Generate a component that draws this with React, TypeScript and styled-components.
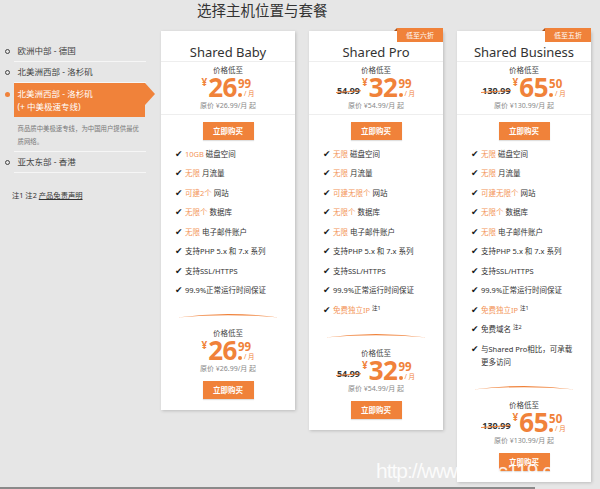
import React from 'react';
import styled, {createGlobalStyle} from 'styled-components';

const ORANGE = '#f0823a';

const GlobalStyle = createGlobalStyle`
  html, body { margin: 0; padding: 0; background: #e6e6e6; }
  body {
    font-family: "Noto Sans", "Noto Sans CJK SC", sans-serif;
    color: #333;
    overflow: hidden;
  }
`;

const Page = styled.div`
  position: relative;
  width: 600px;
  height: 489px;
  overflow: hidden;
`;

const Title = styled.h1`
  margin: 0;
  padding-left: 197px;
  font: normal 14.5px/20px "Noto Sans CJK SC", sans-serif;
  color: #333;
`;

const Main = styled.div`
  display: flex;
  align-items: flex-start;
  margin-top: 11px;
`;

/* ---------- sidebar ---------- */

const Sidebar = styled.div`
  width: 161px;
  flex-shrink: 0;
  padding-top: 10px;
`;

const Region = styled.div`
  display: flex;
  align-items: flex-start;
`;

const Bullet = styled.span<{ $on?: boolean }>`
  box-sizing: border-box;
  width: 5px;
  height: 5px;
  margin: 7.5px 4px 0 4.5px;
  border-radius: 50%;
  flex-shrink: 0;
  border: ${p => (p.$on ? 'none' : '1.2px solid #444')};
  background: ${p => (p.$on ? ORANGE : 'transparent')};
  ${p => p.$on && 'margin-top: 9px;'}
`;

const RegionBody = styled.div`
  width: 132px;
  border-bottom: 1px solid #f6f6f6;
`;

const RegionName = styled.div`
  padding-left: 4px;
  font: 8.5px/20px "Noto Sans", "Noto Sans CJK SC", sans-serif;
  color: #444;
`;

const ActiveBox = styled.div`
  position: relative;
  width: 131px;
  box-sizing: border-box;
  padding: 4px 4px;
  background: ${ORANGE};
  color: #fff;
  font: 8.5px/13px "Noto Sans", "Noto Sans CJK SC", sans-serif;
  &::after {
    content: '';
    position: absolute;
    left: 100%;
    top: 0;
    border-left: 10px solid ${ORANGE};
    border-top: 11px solid transparent;
    border-bottom: 11px solid transparent;
  }
`;

const RegionDesc = styled.div`
  padding: 4.5px 6px 3.5px 4px;
  font: 6.4px/13px "Noto Sans CJK SC", sans-serif;
  color: #777;
`;

const Notes = styled.div`
  margin: 16px 0 0 12px;
  font: 7.3px/12px "Noto Sans", "Noto Sans CJK SC", sans-serif;
  color: #333;
  a { color: #333; text-decoration: underline; }
`;

/* ---------- cards ---------- */

const Cards = styled.div`
  display: flex;
  align-items: flex-start;
  gap: 14px;
`;

const Card = styled.div`
  position: relative;
  width: 134px;
  padding-bottom: 11px;
  background: #fff;
  box-shadow: 1px 1px 3px rgba(0, 0, 0, 0.18);
  display: flex;
  flex-direction: column;
`;

const Badge = styled.div`
  position: absolute;
  top: -3px;
  right: 0;
  width: 46px;
  height: 14px;
  background: ${ORANGE};
  color: #fff;
  font: 7px/14px "Noto Sans CJK SC", sans-serif;
  text-align: center;
  &::before {
    content: '';
    position: absolute;
    left: -3px;
    top: 0;
    border-bottom: 3px solid #a9521c;
    border-left: 3px solid transparent;
  }
`;

const CardHead = styled.div`
  box-sizing: border-box;
  height: 31px;
  padding-top: 13px;
  border-bottom: 1px solid #eee;
  text-align: center;
  font: 13px/17px "Noto Sans", sans-serif;
  color: #333;
`;

const PriceBlock = styled.div<{ $divided?: boolean }>`
  text-align: center;
  padding-bottom: ${p => (p.$divided ? '3px' : '0')};
  border-bottom: ${p => (p.$divided ? '1px solid #eee' : 'none')};
`;

const PriceLabel = styled.div<{ $gap: number }>`
  margin-top: ${p => p.$gap}px;
  font: 7.5px/10px "Noto Sans CJK SC", sans-serif;
  color: #444;
`;

const PriceRow = styled.div`
  display: flex;
  justify-content: center;
  align-items: flex-end;
  height: 22px;
  margin-top: 1px;
  color: ${ORANGE};
  font-family: "Noto Sans", sans-serif;
  font-weight: 700;
`;

const OldPrice = styled.span`
  position: relative;
  margin: 0 2px 2px 0;
  font-size: 9px;
  line-height: 10px;
  color: #333;
  &::after {
    content: '';
    position: absolute;
    left: -1px;
    right: -1px;
    top: 5px;
    height: 1.2px;
    background: ${ORANGE};
    transform: rotate(-4deg);
  }
`;

const Yen = styled.span`
  align-self: flex-start;
  margin: 2px 1px 0 0;
  font-size: 10px;
  line-height: 9px;
`;

const BigNum = styled.span`
  font-size: 26px;
  line-height: 22px;
  letter-spacing: -0.5px;
`;

const Decimal = styled.span`
  align-self: stretch;
  display: flex;
  flex-direction: column;
  justify-content: space-between;
  margin-left: 1px;
  text-align: left;
`;

const Cents = styled.span`
  margin-top: 3px;
  font-size: 11.5px;
  line-height: 10px;
`;

const DecBottom = styled.span`
  display: flex;
  align-items: flex-end;
`;

const Dot = styled.span`
  width: 4px;
  height: 4px;
  margin: 0 2px 1px 0;
  border-radius: 50%;
  background: ${ORANGE};
`;

const Per = styled.span`
  font: 400 6.5px/8px "Noto Sans", "Noto Sans CJK SC", sans-serif;
`;

const OrigPrice = styled.div`
  margin-top: 3px;
  font: 7px/10px "Noto Sans", "Noto Sans CJK SC", sans-serif;
  color: #888;
`;

const BuyButton = styled.button<{ $top: number }>`
  display: block;
  width: 51px;
  height: 18px;
  margin: ${p => p.$top}px auto 0;
  padding: 0;
  border: none;
  background: ${ORANGE};
  color: #fff;
  font: 700 7.5px/18px "Noto Sans CJK SC", sans-serif;
  box-shadow: 0 1px 1px rgba(0, 0, 0, 0.12);
`;

const Features = styled.ul`
  list-style: none;
  margin: 4.25px 0 0;
  padding: 0 16px 0 14px;
`;

const Feature = styled.li`
  display: flex;
  padding: 3.25px 0;
  font: 7.5px/13px "Noto Sans", "Noto Sans CJK SC", sans-serif;
  color: #333;
`;

const Check = styled.span`
  width: 10px;
  flex-shrink: 0;
  font: 9px/13px "DejaVu Sans", sans-serif;
  color: #1a1a1a;
`;

const Hi = styled.span`
  color: #f39457;
`;

const Note = styled.sup`
  font-size: 5.5px;
  line-height: 0;
  vertical-align: 3px;
  margin-left: 2px;
  color: #333;
`;

const Curve = styled.svg`
  display: block;
  margin: 12px auto 0;
`;

const Watermark = styled.div`
  position: absolute;
  left: 376px;
  top: 459px;
  font: 21px/24px "Liberation Sans", sans-serif;
  letter-spacing: -1px;
  color: rgba(255, 255, 255, 0.85);
  pointer-events: none;
  white-space: nowrap;
`;

const ScrollTrack = styled.div`
  position: absolute;
  left: 0;
  bottom: 0;
  width: 535px;
  height: 2px;
  background: #8a8a8a;
`;

type Feat = { hi?: string; text?: string; note?: string };

type Plan = {
  name: string;
  badge?: string;
  old?: string;
  whole: string;
  cents: string;
  orig: string;
  features: Feat[];
};

const base: Feat[] = [
  {text: '支持PHP 5.x 和 7.x 系列'},
  {text: '支持SSL/HTTPS'},
  {text: '99.9%正常运行时间保证'},
];

const plans: Plan[] = [
  {
    name: 'Shared Baby',
    whole: '26',
    cents: '99',
    orig: '原价 ¥26.99/月 起',
    features: [
      {hi: '10GB', text: ' 磁盘空间'},
      {hi: '无限', text: ' 月流量'},
      {hi: '可建2个', text: ' 网站'},
      {hi: '无限个', text: ' 数据库'},
      {hi: '无限', text: ' 电子邮件账户'},
      ...base,
    ],
  },
  {
    name: 'Shared Pro',
    badge: '低至六折',
    old: '54.99',
    whole: '32',
    cents: '99',
    orig: '原价 ¥54.99/月 起',
    features: [
      {hi: '无限', text: ' 磁盘空间'},
      {hi: '无限', text: ' 月流量'},
      {hi: '可建无限个', text: ' 网站'},
      {hi: '无限个', text: ' 数据库'},
      {hi: '无限', text: ' 电子邮件账户'},
      ...base,
      {hi: '免费独立IP', note: '注1'},
    ],
  },
  {
    name: 'Shared Business',
    badge: '低至五折',
    old: '130.99',
    whole: '65',
    cents: '50',
    orig: '原价 ¥130.99/月 起',
    features: [
      {hi: '无限', text: ' 磁盘空间'},
      {hi: '无限', text: ' 月流量'},
      {hi: '可建无限个', text: ' 网站'},
      {hi: '无限个', text: ' 数据库'},
      {hi: '无限', text: ' 电子邮件账户'},
      ...base,
      {hi: '免费独立IP', note: '注1'},
      {text: '免费域名', note: '注2'},
      {text: '与Shared Pro相比，可承载更多访问'},
    ],
  },
];

function Price({plan, divided, gap}: { plan: Plan; divided?: boolean; gap: number }) {
  return (
    <PriceBlock $divided={divided}>
      <PriceLabel $gap={gap}>价格低至</PriceLabel>
      <PriceRow>
        {plan.old && <OldPrice>{plan.old}</OldPrice>}
        <Yen>¥</Yen>
        <BigNum>{plan.whole}</BigNum>
        <Decimal>
          <Cents>{plan.cents}</Cents>
          <DecBottom>
            <Dot/>
            <Per>/ 月</Per>
          </DecBottom>
        </Decimal>
      </PriceRow>
      <OrigPrice>{plan.orig}</OrigPrice>
    </PriceBlock>
  );
}

function PlanCard({plan}: { plan: Plan }) {
  return (
    <Card>
      {plan.badge && <Badge>{plan.badge}</Badge>}
      <CardHead>{plan.name}</CardHead>
      <Price plan={plan} divided gap={3}/>
      <BuyButton $top={7}>立即购买</BuyButton>
      <Features>
        {plan.features.map((f, i) => (
          <Feature key={i}>
            <Check>✔</Check>
            <span>
              {f.hi && <Hi>{f.hi}</Hi>}
              {f.text}
              {f.note && <Note>{f.note}</Note>}
            </span>
          </Feature>
        ))}
      </Features>
      <Curve width="102" height="6" viewBox="0 0 102 6">
        <path d="M0 5.5 Q51 -1.5 102 5.5 Q51 0.8 0 5.5 Z" fill={ORANGE}/>
      </Curve>
      <Price plan={plan} gap={10}/>
      <BuyButton $top={7}>立即购买</BuyButton>
    </Card>
  );
}

export default function App() {
  return (
    <Page>
      <GlobalStyle/>
      <Title>选择主机位置与套餐</Title>
      <Main>
        <Sidebar>
          <Region>
            <Bullet/>
            <RegionBody><RegionName>欧洲中部 - 德国</RegionName></RegionBody>
          </Region>
          <Region>
            <Bullet/>
            <RegionBody><RegionName>北美洲西部 - 洛杉矶</RegionName></RegionBody>
          </Region>
          <Region>
            <Bullet $on/>
            <RegionBody>
              <ActiveBox>北美洲西部 - 洛杉矶<br/>(+ 中美极速专线)</ActiveBox>
              <RegionDesc>商品质中美极速专线，为中国用户提供最优质网络。</RegionDesc>
            </RegionBody>
          </Region>
          <Region>
            <Bullet/>
            <RegionBody><RegionName>亚太东部 - 香港</RegionName></RegionBody>
          </Region>
          <Notes>注1 注2 <a>产品免责声明</a></Notes>
        </Sidebar>
        <Cards>
          {plans.map(p => <PlanCard key={p.name} plan={p}/>)}
        </Cards>
      </Main>
      <Watermark>http://www.vpsc119.com</Watermark>
      <ScrollTrack/>
    </Page>
  );
}
